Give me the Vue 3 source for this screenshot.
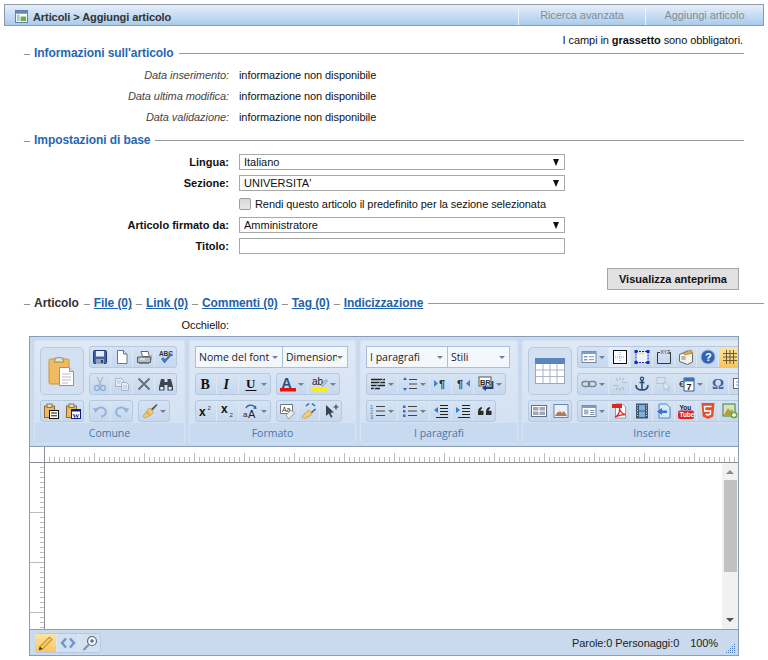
<script setup>
const icons = {
  paste: '<rect x="3" y="4" width="20" height="25" rx="1.5" fill="#f2bb60" stroke="#c99445"/><path d="M9 5V3h2.5a2 2 0 0 1 3 0H17v2l1 2H8z" fill="#e8e4c8" stroke="#8f8a68"/><path d="M13.5 12.5h10l4 4v14h-14z" fill="#fff" stroke="#8b95a3"/><path d="M23.5 12.5v4h4" fill="#dde3ea" stroke="#8b95a3"/><path d="M16 19h9M16 22h9M16 25h9M16 28h6" stroke="#b5bcc6"/>',
  table: '<rect x="1.5" y="3.5" width="29" height="25" fill="#fff" stroke="#9aa7b6"/><rect x="1" y="3" width="30" height="6" fill="#5b86bd"/><path d="M1.5 15h29M1.5 21.5h29M9 9v19M16 9v19M23 9v19" stroke="#aab6c4"/>',
  save: '<rect x="1.5" y="1.5" width="13" height="13" rx="1" fill="#3f66a8" stroke="#22386a"/><rect x="4" y="2" width="8" height="5.5" fill="#e6edf7"/><rect x="4" y="10" width="8" height="5" fill="#9aa3b5"/><rect x="9" y="11" width="2" height="3" fill="#2e3f66"/>',
  doc: '<path d="M3.5 1.5h6l3.5 3.5v9.5h-9.5z" fill="#fff" stroke="#6a7482"/><path d="M9.5 1.5V5H13" fill="#dde3ea" stroke="#6a7482"/>',
  print: '<path d="M5 2.5h7l1.5 5h-7z" fill="#fff" stroke="#666"/><path d="M1.5 8h13v5.5h-13z" fill="#b9bec5" stroke="#55595f"/><path d="M3 13.5h10V15H3z" fill="#7d8289"/><path d="M4 10h5" stroke="#fff"/><path d="M14.5 8l1-2.5v5l-1 3z" fill="#777"/>',
  spell: '<text x="1" y="6.5" font-family="Liberation Sans,sans-serif" font-size="6.5" font-weight="700" fill="#333">ABC</text><path d="M3.5 10l3 4L14 5.500l-1.500-1L7 10.500 5 8.500z" fill="#3f79c8" stroke="#24528f" stroke-width=".5"/>',
  cut: '<path d="M5 1l4.5 9M11 1L6.5 10" stroke="#8a8f97" stroke-width="1.4" fill="none"/><circle cx="5" cy="12" r="2.4" fill="none" stroke="#4a7fc0" stroke-width="1.5"/><circle cx="11" cy="12" r="2.4" fill="none" stroke="#4a7fc0" stroke-width="1.5"/>',
  copy: '<path d="M1.5 2.5h6l2 2v6h-8z" fill="#fff" stroke="#7b8592"/><path d="M7.5 6.5h5l2 2v6h-7z" fill="#fff" stroke="#7b8592"/><path d="M3 5h4M3 7h3M9 10h4M9 12h4" stroke="#9aa3ae"/>',
  del: '<path d="M2.5 2.5l11 11M13.5 2.5l-11 11" stroke="#6e7277" stroke-width="2" fill="none"/>',
  find: '<path d="M3 3h3.5v3h3V3H13l2 8v3.500H9.500V9h-3v5.500H1V11z" fill="#3d4650"/><rect x="2.300" y="11" width="3" height="2.600" fill="#e4eef9"/><rect x="10.600" y="11" width="3" height="2.600" fill="#e4eef9"/>',
  pasteText: '<rect x="1.5" y="3" width="10" height="11.5" fill="#f0b95e" stroke="#8d6a2b"/><rect x="4" y="1" width="5" height="3.4" fill="#e6e2c4" stroke="#7c7656"/><rect x="6.5" y="7.5" width="9" height="8" fill="#fff" stroke="#111"/><path d="M8 10h6M8 12.800h6" stroke="#111"/>',
  pasteWord: '<rect x="1.5" y="3" width="10" height="11.5" fill="#f0b95e" stroke="#8d6a2b"/><rect x="4" y="1" width="5" height="3.4" fill="#e6e2c4" stroke="#7c7656"/><rect x="6.5" y="6.5" width="9" height="9" fill="#fff" stroke="#141a7d"/><rect x="6.5" y="6.5" width="9" height="2" fill="#141a7d"/><text x="7.6" y="15" font-family="Liberation Serif,serif" font-size="7" font-weight="700" fill="#141a7d">W</text>',
  undo: '<path d="M4 8a5 4.500 0 1 1 5 5.500" fill="none" stroke="#4a7fc0" stroke-width="2"/><path d="M1 5l6 .5L3.500 10z" fill="#4a7fc0"/>',
  redo: '<path d="M12 8a5 4.500 0 1 0-5 5.500" fill="none" stroke="#4a7fc0" stroke-width="2"/><path d="M15 5l-6 .5 3.500 4.500z" fill="#4a7fc0"/>',
  brush: '<path d="M9 6l5.500-5 1 1-5 5.500z" fill="#555"/><path d="M7.500 5l4 4-2 2.500L3 15l-2-1.500 4-6z" fill="#f2cb72" stroke="#b98f3a" stroke-width=".7"/><path d="M4 10l3 1.500M5 8.500l3 2" stroke="#b98f3a" stroke-width=".7"/>',
  bold: '<text x="2.5" y="13" font-family="Liberation Serif,serif" font-size="14" font-weight="700" fill="#111">B</text>',
  italic: '<text x="3.5" y="13" font-family="Liberation Serif,serif" font-size="14" font-weight="700" font-style="italic" fill="#111">I</text>',
  under: '<text x="3" y="11.5" font-family="Liberation Serif,serif" font-size="13" font-weight="700" fill="#111">U</text><path d="M2.500 14.500h11" stroke="#111"/>',
  fontColor: '<text x="1.5" y="11.5" font-family="Liberation Sans,sans-serif" font-size="14" font-weight="700" fill="#2a4d86">A</text><rect x="0" y="12" width="16" height="3.5" fill="#e8120f"/>',
  highlight: '<text x="0" y="8.5" font-family="Liberation Sans,sans-serif" font-size="10" fill="#222">ab</text><path d="M9 9l5-5.500 1.500 1.500-5 5.500z" fill="#c9ced6" stroke="#68707c" stroke-width=".6"/><rect x="0" y="12" width="16" height="3.5" fill="#f8ef12"/>',
  sup: '<text x="1" y="13" font-family="Liberation Sans,sans-serif" font-size="12" font-weight="700" fill="#111">x</text><text x="9.5" y="7" font-family="Liberation Sans,sans-serif" font-size="6" fill="#333">2</text>',
  sub: '<text x="1" y="10" font-family="Liberation Sans,sans-serif" font-size="12" font-weight="700" fill="#111">x</text><text x="9.5" y="14" font-family="Liberation Sans,sans-serif" font-size="6" fill="#333">2</text>',
  caseIcon: '<text x="0" y="14" font-family="Liberation Sans,sans-serif" font-size="8" fill="#222">a</text><text x="5" y="14.5" font-family="Liberation Sans,sans-serif" font-size="11" fill="#222">A</text><path d="M3 5c1-3 6-4 9-1" fill="none" stroke="#2a63b0" stroke-width="1.3"/><path d="M13.500 6L10 5.500l3-3z" fill="#2a63b0"/>',
  clearFormat: '<path d="M1.500 1.500h12v9h-12z" fill="#fff" stroke="#6f7782"/><text x="3" y="8.5" font-family="Liberation Sans,sans-serif" font-size="7" fill="#333">Aa</text><path d="M7 12l5-5 3.500 3-5 5.500H9z" fill="#e9edf2" stroke="#7a828d" stroke-width=".7"/>',
  painter: '<path d="M5 3l3-2.500M11 .5l3 2.500" stroke="#2f6fc3" stroke-width="1.6" fill="none"/><path d="M14.500 6L10 10" stroke="#555" stroke-width="1.5"/><path d="M7.500 7l3.500 3.500-2 2.500-5.500 2.500L1 13.500l4-4z" fill="#f2cb72" stroke="#b98f3a" stroke-width=".7"/>',
  cursor: '<path d="M3 2l8 7.500-3.500.2 2 4.300-1.600.7-2-4.300L3 13z" fill="#39424e"/><path d="M13 1.500v5M10.500 4h5" stroke="#39424e" stroke-width="1.2"/>',
  justify: '<path d="M1 3.500h14M1 6.500h14M1 9.500h14M1 12.500h9" stroke="#222" stroke-width="1.3"/><path d="M3 14L14 2" stroke="#c8d9ec"/>',
  spacing: '<path d="M7 3.500h8M7 8h8M7 12.500h8" stroke="#444"/><path d="M3 1l2 3H1zM3 15l2-3H1z" fill="#2f6fc3"/>',
  ltr: '<path d="M1 4l4 3.500L1 11z" fill="#3c86d1"/><text x="6" y="12" font-family="Liberation Sans,sans-serif" font-size="11" font-weight="700" fill="#333">¶</text>',
  rtl: '<text x="2" y="12" font-family="Liberation Sans,sans-serif" font-size="11" font-weight="700" fill="#333">¶</text><path d="M15 4l-4 3.500 4 3.500z" fill="#3c86d1"/>',
  br: '<rect x="1" y="1" width="12" height="9" fill="#fff" stroke="#555"/><text x="2" y="8.5" font-family="Liberation Sans,sans-serif" font-size="7.5" font-weight="700" fill="#222">BR</text><path d="M14.500 5v7H7" fill="none" stroke="#1e3f7a" stroke-width="1.8"/><path d="M4 12l4-3v6z" fill="#1e3f7a"/>',
  ol: '<text x="0" y="6" font-family="Liberation Sans,sans-serif" font-size="5.5" fill="#2f6fc3">1</text><text x="0" y="11" font-family="Liberation Sans,sans-serif" font-size="5.5" fill="#2f6fc3">2</text><text x="0" y="15.5" font-family="Liberation Sans,sans-serif" font-size="5.5" fill="#2f6fc3">3</text><path d="M6 3.500h9M6 8h9M6 12.500h9" stroke="#444"/>',
  ul: '<rect x="1" y="2.500" width="2.500" height="2.500" fill="#2f6fc3"/><rect x="1" y="7" width="2.500" height="2.500" fill="#2f6fc3"/><rect x="1" y="11.500" width="2.500" height="2.500" fill="#2f6fc3"/><path d="M6 3.500h9M6 8h9M6 12.500h9" stroke="#444"/>',
  outdent: '<path d="M7 2.500h8M7 5.500h8M7 8.500h8M7 11.500h8M3 14.500h12" stroke="#222"/><path d="M1 7l4-3v6z" fill="#2f7fd0"/>',
  indent: '<path d="M7 2.500h8M7 5.500h8M7 8.500h8M7 11.500h8M3 14.500h12" stroke="#222"/><path d="M5 7L1 4v6z" fill="#2f7fd0"/>',
  quote: '<path d="M1 9c0-3 1.500-4.500 4-5v1.800C4 6.200 3.500 7 3.500 7.800h3V12H1zM9 9c0-3 1.500-4.500 4-5v1.800c-1 .4-1.500 1.200-1.500 2h3V12H9z" fill="#2b2b2b"/>',
  form: '<rect x="1" y="2.500" width="14" height="11" fill="#fff" stroke="#6e86a6"/><rect x="1" y="2.500" width="14" height="2.500" fill="#7f9cc4"/><rect x="3" y="7" width="3.500" height="1.500" fill="#7f9cc4"/><rect x="3" y="10" width="3.500" height="1.500" fill="#7f9cc4"/><path d="M8 7.700h5M8 10.700h5" stroke="#7f8fa5"/>',
  guide: '<rect x="1.500" y="1.500" width="13" height="13" fill="#fff" stroke="#111"/><path d="M8 3v10M3 8h10" stroke="#8aa4c4" stroke-dasharray="1 1"/>',
  abs: '<rect x="2" y="2.500" width="12" height="11" fill="#eef3fa" stroke="#1028c0" stroke-dasharray="2 1"/><rect x=".5" y="1" width="3" height="3" fill="#1028c0"/><rect x="12.500" y="1" width="3" height="3" fill="#1028c0"/><rect x=".5" y="12" width="3" height="3" fill="#1028c0"/><rect x="12.500" y="12" width="3" height="3" fill="#1028c0"/><path d="M3.500 3.500h6L11 5H3.500z" fill="#f5d98c"/>',
  xyz: '<path d="M4 3.500H1.500v11h13v-11H13" fill="none" stroke="#333"/><text x="4.5" y="5" font-family="Liberation Sans,sans-serif" font-size="5" fill="#333">XYZ</text>',
  card: '<path d="M1.500 5.500l8-3.500 5 3v8l-5 2.500-8-3z" fill="#f2f2ec" stroke="#6b6b5c"/><path d="M5 4l8-3 2 3-8 2z" fill="#d5b04c" stroke="#8d7430" stroke-width=".6"/><path d="M3.500 8h4M3.500 10h4" stroke="#777"/>',
  help: '<circle cx="8" cy="8" r="7" fill="#2f63b5" stroke="#9db6da"/><text x="5" y="12" font-family="Liberation Sans,sans-serif" font-size="11" font-weight="700" fill="#fff">?</text>',
  grid: '<path d="M1 4.500h14M1 8h14M1 11.500h14M4.500 1v14M8 1v14M11.500 1v14" stroke="#6a5a38" fill="none"/>',
  link: '<rect x="1" y="5.500" width="7.500" height="5" rx="2.500" fill="none" stroke="#7c8794" stroke-width="1.4"/><rect x="7.500" y="5.500" width="7.500" height="5" rx="2.500" fill="none" stroke="#7c8794" stroke-width="1.4"/>',
  unlink: '<path d="M1 9.500h5M10 6.500h5M4 2l2 3M12 14l-2-3M8 1v3M8 12v3M12 2l-2 3M4 14l2-3" stroke="#8a949f" stroke-width="1.2"/>',
  anchor: '<circle cx="8" cy="2.800" r="1.600" fill="none" stroke="#25456f" stroke-width="1.2"/><path d="M8 4v10M5.500 6.500h5" stroke="#25456f" stroke-width="1.5"/><path d="M2 9c0 3.500 3 5 6 5s6-1.500 6-5" fill="none" stroke="#25456f" stroke-width="1.5"/>',
  select: '<rect x="1" y="1.500" width="8" height="6" fill="#dfe6ee" stroke="#9aa3ae"/><path d="M8 6l6 5.500-2.500.2 1.500 3-1.200.6-1.500-3L8 14z" fill="#fff" stroke="#7b8592" stroke-width=".7"/>',
  date: '<path d="M5 2h10v13H5z" fill="#fff" stroke="#2a5696"/><rect x="5" y="2" width="10" height="3.500" fill="#3c72b8"/><text x="7.5" y="14" font-family="Liberation Sans,sans-serif" font-size="9" font-weight="700" fill="#222">7</text><text x="0" y="11" font-family="Liberation Sans,sans-serif" font-size="9" fill="#222">€</text>',
  omega: '<text x="2" y="13" font-family="Liberation Serif,serif" font-size="15" font-weight="700" fill="#3b63a5">Ω</text>',
  box: '<rect x="1.500" y="2.500" width="11" height="10" fill="#fff" stroke="#666"/><path d="M4 6h6M4 9h6" stroke="#999"/>',
  cells: '<rect x=".5" y="2.500" width="15" height="11" fill="#fff" stroke="#5f7186"/><rect x="2" y="4" width="5.500" height="3.500" fill="#9aa8b8"/><rect x="8.500" y="4" width="5.500" height="3.500" fill="#9aa8b8"/><rect x="2" y="8.500" width="5.500" height="3.500" fill="#9aa8b8"/><rect x="8.500" y="8.500" width="5.500" height="3.500" fill="#9aa8b8"/>',
  image: '<rect x="1" y="1.500" width="14" height="13" fill="#e8f0f9" stroke="#6c87a8"/><path d="M2 13l4-6 3 3 2-2 3 5z" fill="#b07a5e"/><path d="M5 9l1-2 1 2z" fill="#fff"/>',
  layout: '<rect x="1" y="2.500" width="14" height="11" fill="#fff" stroke="#6e86a6"/><rect x="1" y="2.500" width="14" height="2.500" fill="#7f9cc4"/><rect x="3" y="6.500" width="4.500" height="5" fill="#a9b5c5"/><path d="M9 7.500h4.500M9 9.500h4.500M9 11.500h4.500" stroke="#7f8fa5"/>',
  pdf: '<path d="M3.500 1h7l3 3v11h-10z" fill="#fff" stroke="#999"/><rect x="0" y="1" width="10" height="4" fill="#d8281e"/><path d="M3 14c3-1 5-5 4.500-9 0 3 2.500 6 6 6.500-3 0-7 1-10.500 2.500z" fill="none" stroke="#d8281e" stroke-width="1.3"/>',
  film: '<rect x="2" y=".5" width="12" height="15" fill="#3e5870"/><rect x="5" y="2" width="6" height="5.500" fill="#7fb0d8"/><rect x="5" y="8.500" width="6" height="5.500" fill="#7fb0d8"/><path d="M3.500 2v12M12.500 2v12" stroke="#cfd8e0" stroke-dasharray="1 1.5"/>',
  flash: '<path d="M3 1h7.500L14 4.500V15H3z" fill="#dbe9f7" stroke="#4c86c6"/><path d="M1 8.500L6 5v2.500h5V10H6v2z" fill="#2f78c4"/>',
  youtube: '<text x="1.5" y="6.5" font-family="Liberation Sans,sans-serif" font-size="6.5" font-weight="700" fill="#222">You</text><rect x="0" y="7.500" width="16" height="8.500" rx="2" fill="#d7262b"/><text x="1.5" y="14.2" font-family="Liberation Sans,sans-serif" font-size="6.5" font-weight="700" fill="#fff">Tube</text>',
  html5: '<path d="M1.500 0h13l-1.200 13.500L8 16l-5.300-2.500z" fill="#e4502a"/><path d="M11.500 3.500h-7l.3 4.500h5.800l-.3 3.200L8 12l-2.300-.8" fill="none" stroke="#fff" stroke-width="1.5"/>',
  imagePlus: '<rect x="1" y="1" width="12" height="12" fill="#d3e4c0" stroke="#4d7b3a"/><path d="M2 12l4-7 2 3 2-2 2 6z" fill="#b79a3d"/><circle cx="12" cy="12" r="3.500" fill="#63b23c"/><path d="M10 12h4M12 10v4" stroke="#fff" stroke-width="1.3"/>',
  pencil: '<path d="M2 11.500L11.500 2 14 4.500 4.500 14 1 15z" fill="#f6c95f" stroke="#a8741f"/><path d="M1 15l1-3.500L4.500 14z" fill="#4a3a20"/>',
  code: '<path d="M6 3.500L2 8l4 4.500M10 3.500L14 8l-4 4.500" fill="none" stroke="#6d95c9" stroke-width="2.4"/>',
  zoom: '<circle cx="10" cy="6" r="4.500" fill="#eef4fb" stroke="#5c6b80" stroke-width="1.2"/><path d="M8 6h4M10 4v4" stroke="#3d4c60"/><path d="M7 9.500L1.500 15" stroke="#7f8b99" stroke-width="1.8"/>'
};

const b = (i, extra = {}) => ({i, ...extra});
const arrow = i => b(i, {arrow: true});
const dim = i => b(i, {dim: true});

const groups = [
  {
    name: 'Comune', width: 151, big: 'paste',
    rows: [
      [{btns: [b('save'), b('doc'), b('print'), b('spell')]}],
      [{btns: [dim('cut'), dim('copy'), b('del'), b('find')]}],
      [{btns: [b('pasteText'), b('pasteWord')]}, {btns: [dim('undo'), dim('redo')]}, {btns: [arrow('brush')]}]
    ]
  },
  {
    name: 'Formato', width: 167,
    rows: [
      [{combos: [{label: 'Nome del font', width: 87}, {label: 'Dimensioni', width: 64}]}],
      [{btns: [b('bold'), b('italic'), arrow('under')]}, {btns: [arrow('fontColor'), arrow('highlight')]}],
      [{btns: [b('sup'), b('sub'), arrow('caseIcon')]}, {btns: [b('clearFormat'), b('painter'), b('cursor')]}]
    ]
  },
  {
    name: 'I paragrafi', width: 158,
    rows: [
      [{combos: [{label: 'I paragrafi', width: 81}, {label: 'Stili', width: 61}]}],
      [{btns: [arrow('justify'), arrow('spacing'), b('ltr'), b('rtl'), arrow('br')]}],
      [{btns: [arrow('ol'), arrow('ul'), b('outdent'), b('indent'), b('quote')]}]
    ]
  },
  {
    name: 'Inserire', width: 260, big: 'table',
    rows: [
      [{btns: [arrow('form'), b('guide', {light: true}), b('abs'), b('xyz'), b('card'), b('help'), b('grid', {on: true})]}],
      [{btns: [arrow('link'), dim('unlink'), b('anchor'), dim('select'), arrow('date'), b('omega'), b('box')]}],
      [{btns: [b('cells'), b('image')]}, {btns: [arrow('layout'), b('pdf'), b('film'), b('flash'), b('youtube'), b('html5'), b('imagePlus')]}]
    ]
  }
];

const infoRows = [
  {label: 'Data inserimento:', value: 'informazione non disponibile'},
  {label: 'Data ultima modifica:', value: 'informazione non disponibile'},
  {label: 'Data validazione:', value: 'informazione non disponibile'}
];

const statusButtons = [b('pencil', {on: true}), b('code'), b('zoom')];
</script>

<template>
  <div class="page">
    <header class="topbar">
      <svg class="topbar-icon" viewBox="0 0 14 14" width="13" height="13">
        <rect x=".5" y=".5" width="13" height="13" fill="#fff" stroke="#5b7a9c"/>
        <rect x="1" y="1" width="12" height="3" fill="#5e8cc0"/>
        <rect x="2" y="5" width="3" height="7" fill="#a9c6e2"/>
        <rect x="6" y="7" width="6" height="5" fill="#6bb04a"/>
      </svg>
      <span class="topbar-title">Articoli &gt; Aggiungi articolo</span>
      <nav class="tabs">
        <a class="tab tab-search">Ricerca avanzata</a>
        <a class="tab tab-add">Aggiungi articolo</a>
      </nav>
    </header>

    <p class="required">I campi in <b>grassetto</b> sono obbligatori.</p>

    <div class="legend"><span class="dash">–</span><span class="legend-title">Informazioni sull'articolo</span><span class="rule"></span></div>
    <div class="form-grid">
      <template v-for="row in infoRows" :key="row.label">
        <em class="info-label">{{ row.label }}</em>
        <span>{{ row.value }}</span>
      </template>
    </div>

    <div class="legend legend-base"><span class="dash">–</span><span class="legend-title">Impostazioni di base</span><span class="rule"></span></div>
    <div class="form-grid">
      <label>Lingua:</label>
      <div class="sel"><select><option>Italiano</option></select></div>
      <label>Sezione:</label>
      <div class="sel"><select><option>UNIVERSITA'</option></select></div>
      <span></span>
      <div class="check"><input type="checkbox" /><span>Rendi questo articolo il predefinito per la sezione selezionata</span></div>
      <label>Articolo firmato da:</label>
      <div class="sel"><select><option>Amministratore</option></select></div>
      <label>Titolo:</label>
      <input class="title-input" type="text" />
    </div>

    <div class="actions"><button type="button" class="preview">Visualizza anteprima</button></div>

    <div class="legend legend-tabs">
      <span class="dash">–</span><span class="tab-current">Articolo</span>
      <span class="dash">–</span><a class="tab-link">File (0)</a>
      <span class="dash">–</span><a class="tab-link">Link (0)</a>
      <span class="dash">–</span><a class="tab-link">Commenti (0)</a>
      <span class="dash">–</span><a class="tab-link">Tag (0)</a>
      <span class="dash">–</span><a class="tab-link">Indicizzazione</a>
      <span class="rule"></span>
    </div>

    <div class="form-grid occhiello"><span class="occhiello-label">Occhiello:</span></div>

    <div class="editor">
      <div class="ribbon">
        <section v-for="g in groups" :key="g.name" class="group" :style="{width: g.width + 'px'}">
          <div class="group-body" :class="{'has-big': g.big}">
            <div v-if="g.big" class="big">
              <svg viewBox="0 0 32 32" width="32" height="32" v-html="icons[g.big]"></svg>
            </div>
            <div v-for="(row, r) in g.rows" :key="r" class="row" :class="{'row-full': r === 2}">
              <div v-for="(strip, s) in row" :key="s" class="strip" :class="{'strip-combo': strip.combos}">
                <template v-if="strip.combos">
                  <div v-for="c in strip.combos" :key="c.label" class="combo" :style="{width: c.width + 'px'}">
                    <span class="combo-text">{{ c.label }}</span><i class="caret"></i>
                  </div>
                </template>
                <template v-else>
                  <span v-for="btn in strip.btns" :key="btn.i" class="btn"
                        :class="{wide: btn.arrow, dim: btn.dim, on: btn.on, light: btn.light}">
                    <svg viewBox="0 0 16 16" width="16" height="16" v-html="icons[btn.i]"></svg>
                    <i v-if="btn.arrow" class="caret"></i>
                  </span>
                </template>
              </div>
            </div>
          </div>
          <div class="group-name">{{ g.name }}</div>
        </section>
      </div>

      <div class="ruler-top"><div class="ruler-corner"></div><div class="ruler-h"></div></div>
      <div class="edit-area">
        <div class="ruler-v"></div>
        <div class="content"></div>
        <div class="scrollbar">
          <i class="scroll-up"></i>
          <div class="thumb"></div>
          <i class="scroll-down"></i>
        </div>
      </div>

      <footer class="statusbar">
        <div class="strip status-strip">
          <span v-for="btn in statusButtons" :key="btn.i" class="btn" :class="{on: btn.on}">
            <svg viewBox="0 0 16 16" width="16" height="16" v-html="icons[btn.i]"></svg>
          </span>
        </div>
        <span class="counts">Parole:0 Personaggi:0</span>
        <span class="percent">100%</span>
        <svg class="grip" viewBox="0 0 11 11" width="11" height="11">
          <g fill="#4a7fc0">
            <rect x="8" y="1" width="1" height="1"/><rect x="6" y="3" width="1" height="1"/><rect x="8" y="3" width="1" height="1"/>
            <rect x="4" y="5" width="1" height="1"/><rect x="6" y="5" width="1" height="1"/><rect x="8" y="5" width="1" height="1"/>
            <rect x="2" y="7" width="1" height="1"/><rect x="4" y="7" width="1" height="1"/><rect x="6" y="7" width="1" height="1"/><rect x="8" y="7" width="1" height="1"/>
            <rect x="0" y="9" width="1" height="1"/><rect x="2" y="9" width="1" height="1"/><rect x="4" y="9" width="1" height="1"/><rect x="6" y="9" width="1" height="1"/><rect x="8" y="9" width="1" height="1"/>
          </g>
        </svg>
      </footer>
    </div>
  </div>
</template>

<style>
html, body {
  background: #fff;
  overflow: hidden;
}
</style>

<style scoped>
.page {
  width: 768px;
  height: 660px;
  box-sizing: border-box;
  padding-top: 4px;
  overflow: hidden;
  font-family: "Liberation Sans", Arial, sans-serif;
  font-size: 11px;
  letter-spacing: -.08px;
  color: #111;
}

.topbar {
  display: flex;
  align-items: center;
  height: 22px;
  box-sizing: border-box;
  margin: 0 4px;
  border: 1px solid #8f9aa6;
  background: linear-gradient(#e6eff9, #a9cbee);
}

.topbar-icon {
  margin-left: 10px;
  margin-top: 3px;
}

.topbar-title {
  margin: 3px 0 0 5px;
  font-weight: 700;
  color: #333;
  font-size: 11px;
}

.tabs {
  display: flex;
  margin-left: auto;
  height: 100%;
}

.tab {
  display: flex;
  align-items: center;
  justify-content: center;
  height: 100%;
  border-left: 1px solid #eef4fb;
  color: #868c94;
  font-size: 11px;
}

.tab-search { width: 126px; }
.tab-add { width: 117px; }

.required {
  margin: 0;
  height: 14px;
  line-height: 14px;
  padding: 7px 25px 0 0;
  text-align: right;
}

.legend {
  display: flex;
  align-items: center;
  gap: 4px;
  height: 14px;
  margin: -1px 24px 0 24px;
  font-size: 13px;
  line-height: 14px;
}

.legend-base {
  margin-top: 6px;
}

.dash {
  color: #777;
  font-size: 11px;
}

.legend-title {
  font-weight: 700;
  color: #2767b0;
  font-size: 12px;
}

.rule {
  flex: 1;
  height: 1px;
  margin-left: 1px;
  background: #9a9a9a;
}

.form-grid {
  display: grid;
  grid-template-columns: 205px 326px;
  column-gap: 10px;
  grid-auto-rows: 21px;
  align-items: center;
  margin: 4px 0 0 24px;
}

.form-grid label {
  text-align: right;
  font-weight: 700;
  letter-spacing: 0;
}

.info-label {
  text-align: right;
  color: #444;
}

.sel {
  position: relative;
  height: 16px;
}

.sel select {
  display: block;
  width: 100%;
  height: 100%;
  margin: 0;
  padding: 0 0 0 4px;
  appearance: none;
  border: 1px solid #a8a8a8;
  border-radius: 0;
  background: #fff;
  font: 11px "Liberation Sans", Arial, sans-serif;
  color: #111;
}

.sel::after {
  content: "";
  position: absolute;
  right: 6px;
  top: 5px;
  border-left: 3.5px solid transparent;
  border-right: 3.5px solid transparent;
  border-top: 7px solid #111;
}

.check {
  display: flex;
  align-items: center;
  gap: 4px;
  white-space: nowrap;
}

.check input {
  appearance: none;
  width: 12px;
  height: 12px;
  margin: 0;
  border: 1px solid #9e9e9e;
  border-radius: 2px;
  background: linear-gradient(#d8d8d8, #e8e8e8);
}

.title-input {
  height: 16px;
  box-sizing: border-box;
  margin: 0;
  border: 1px solid #a8a8a8;
  padding: 0;
  width: 326px;
}

.actions {
  display: flex;
  justify-content: flex-end;
  padding: 12px 29px 0 0;
}

.preview {
  width: 132px;
  height: 22px;
  padding: 0;
  border: 1px solid #a5a5a5;
  background: #e1e1e1;
  font: 700 11px "Liberation Sans", Arial, sans-serif;
  color: #111;
}

.legend-tabs {
  margin: 6px 4px 0 24px;
}

.tab-current {
  margin-right: 1px;
  font-size: 12px;
  color: #333;
  font-weight: 700;
}

.tab-link {
  color: #1d62ad;
  font-weight: 700;
  font-size: 12px;
  text-decoration: underline;
}

.occhiello {
  grid-auto-rows: 14px;
  margin-top: 8px;
}

.occhiello-label {
  grid-column: 1;
  text-align: right;
}

.editor {
  width: 710px;
  height: 320px;
  box-sizing: border-box;
  margin: 4px 0 0 29px;
  border: 1px solid #8a9fb6;
  display: flex;
  flex-direction: column;
}

.ribbon {
  display: flex;
  gap: 4px;
  height: 110px;
  flex: none;
  box-sizing: border-box;
  padding: 3px 0 2px 4px;
  overflow: hidden;
  background: #c9daee;
  border-bottom: 1px solid #8a9fb6;
}

.group {
  flex: none;
  display: flex;
  flex-direction: column;
  box-sizing: border-box;
  border: 1px solid #d6e3f2;
  border-radius: 2px;
  background: linear-gradient(#dfe9f6, #d3e1f2 85%);
}

.group-body {
  flex: 1;
  display: grid;
  grid-template-columns: 1fr;
  grid-auto-rows: 22px;
  row-gap: 5px;
  padding: 5px 0 0 5px;
}

.group-body.has-big {
  grid-template-columns: 44px 1fr;
  column-gap: 5px;
}

.big {
  grid-row: 1 / span 2;
  grid-column: 1;
  display: flex;
  align-items: center;
  justify-content: center;
  border: 1px solid #b5c9e0;
  border-radius: 5px;
  background: #d2e0f1;
  margin-top: 1px;
}

.row {
  display: flex;
  gap: 5px;
  min-width: 0;
}

.row-full {
  grid-column: 1 / -1;
}

.strip {
  display: flex;
  height: 22px;
  box-sizing: border-box;
  border: 1px solid #b5c9e0;
  border-radius: 3px;
  background: linear-gradient(#d6e3f3, #c6d8ee);
}

.strip-combo {
  border-radius: 0;
  border-color: #a9c0da;
  background: #f4f8fc;
}

.combo {
  display: flex;
  align-items: center;
  justify-content: space-between;
  box-sizing: border-box;
  padding: 0 4px 0 3px;
  border-right: 1px solid #a9c0da;
  font-family: "Open Sans", "DejaVu Sans", sans-serif;
  font-size: 10.5px;
  letter-spacing: 0;
  color: #222;
  overflow: hidden;
}

.combo:last-child {
  border-right: 0;
}

.combo-text {
  flex: 1;
  min-width: 0;
  white-space: nowrap;
  overflow: hidden;
}

.btn {
  flex: none;
  display: flex;
  align-items: center;
  justify-content: center;
  gap: 2px;
  width: 22px;
  height: 100%;
  box-sizing: border-box;
  border-right: 1px solid #dce7f4;
}

.btn:first-child {
  margin-left: -1px;
}

.btn:last-child {
  border-right: 0;
  margin-right: -1px;
}

.btn.wide {
  width: 32px;
}

.btn.dim svg {
  opacity: .45;
}

.btn.on {
  background: linear-gradient(#fde3a2, #f9c65a);
}

.btn.light {
  background: #e4edf7;
}

.caret {
  display: block;
  flex: none;
  border-left: 3px solid transparent;
  border-right: 3px solid transparent;
  border-top: 3px solid #6f8196;
}

.group-name {
  flex: none;
  height: 20px;
  line-height: 20px;
  text-align: center;
  background: #c7daf0;
  font-family: "Open Sans", "DejaVu Sans", sans-serif;
  font-size: 10.5px;
  letter-spacing: 0;
  color: #4a76aa;
}

.ruler-top {
  display: flex;
  height: 15px;
  flex: none;
  border-bottom: 1px solid #8a8f96;
}

.ruler-corner {
  width: 14px;
  flex: none;
  border-right: 1px solid #8a8f96;
}

.ruler-h {
  flex: 1;
  background-image:
    linear-gradient(90deg, #bbb 1px, transparent 1px),
    linear-gradient(90deg, #bbb 1px, transparent 1px);
  background-size: 5px 5px, 50px 9px;
  background-position: 4px 100%, 49px 100%;
  background-repeat: repeat-x;
}

.edit-area {
  flex: 1;
  display: flex;
  min-height: 0;
}

.ruler-v {
  width: 14px;
  flex: none;
  border-right: 1px solid #8a8f96;
  background-image:
    linear-gradient(#bbb 1px, transparent 1px),
    linear-gradient(#bbb 1px, transparent 1px);
  background-size: 4px 5px, 14px 50px;
  background-position: 100% 4px, 100% 49px;
  background-repeat: repeat-y;
}

.content {
  flex: 1;
  background: #fff;
}

.scrollbar {
  width: 16px;
  flex: none;
  display: flex;
  flex-direction: column;
  align-items: center;
  background: #f1f1f1;
}

.scroll-up {
  margin-top: 7px;
  border-left: 4px solid transparent;
  border-right: 4px solid transparent;
  border-bottom: 4px solid #8a8a8a;
}

.thumb {
  width: 13px;
  height: 92px;
  margin-top: 6px;
  background: #c1c1c1;
}

.scroll-down {
  margin-top: 46px;
  border-left: 4px solid transparent;
  border-right: 4px solid transparent;
  border-top: 4px solid #555;
}

.statusbar {
  display: flex;
  align-items: center;
  flex: none;
  height: 26px;
  box-sizing: border-box;
  border-top: 1px solid #8a9fb6;
  background: #c9daee;
  padding-left: 5px;
  font-size: 11px;
  color: #222;
}

.status-strip {
  height: 20px;
  background: #d2e0f1;
}

.counts {
  margin-left: auto;
}

.percent {
  margin-left: 11px;
  margin-right: 8px;
}

.grip {
  align-self: flex-end;
  margin: 0 1px 1px 0;
}
</style>
